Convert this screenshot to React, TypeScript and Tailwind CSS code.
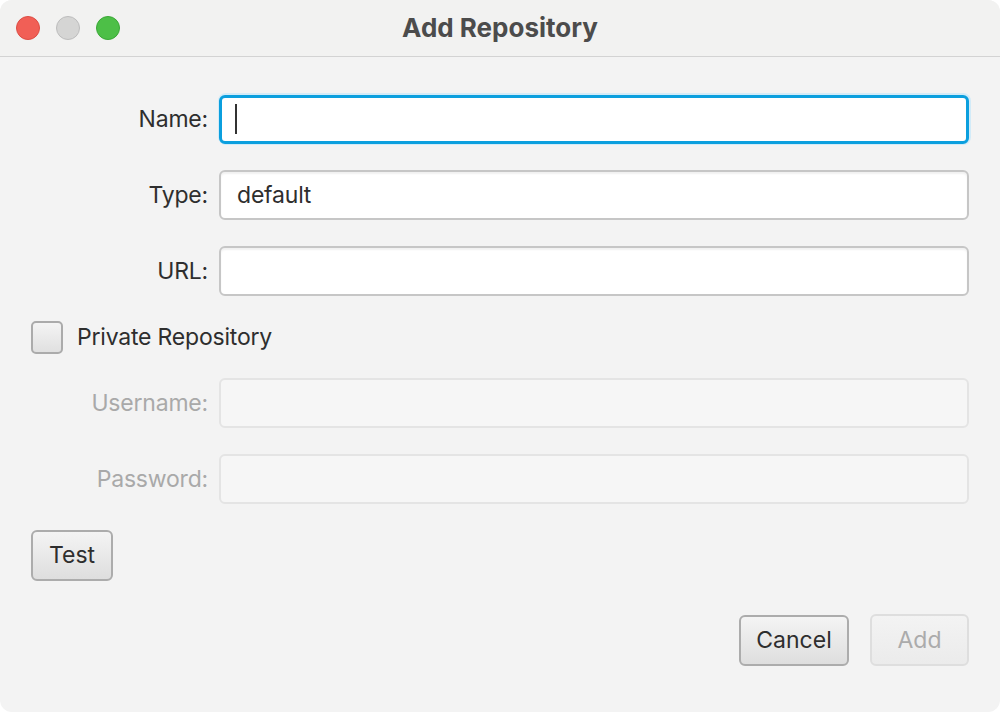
import React from "react";

const font = { fontFamily: "Inter, 'Noto Sans', sans-serif" };

function Field({ children, disabled, focused }: { children?: React.ReactNode; disabled?: boolean; focused?: boolean }) {
  if (focused) {
    return (
      <div className="flex-1 h-[52px] -my-[1px] -mx-[1.5px] rounded-[8px] bg-[#d2ebf8] p-[1.5px]">
        <div className="h-full rounded-[6px] border-[3px] border-[#0b9fde] bg-white flex items-center pl-[13px]">
          {children}
        </div>
      </div>
    );
  }
  return (
    <div
      className={
        "flex-1 h-[50px] rounded-[6px] flex items-center pl-[16px] " +
        (disabled
          ? "border-[2px] border-[#e4e4e4] bg-[#f6f6f6]"
          : "border-[2px] border-[#c6c6c6] bg-white shadow-[inset_0_2px_2px_rgba(0,0,0,0.06)]")
      }
    >
      {children}
    </div>
  );
}

function Row({ label, disabled, focused, children }: { label: string; disabled?: boolean; focused?: boolean; children?: React.ReactNode }) {
  return (
    <div className="flex items-center">
      <div className={"w-[177px] text-right text-[23px] tracking-[-0.2px] " + (disabled ? "text-[#a9a9a9]" : "text-[#2e2e2e]")}>{label}</div>
      <div className="w-[11px]" />
      <Field disabled={disabled} focused={focused}>{children}</Field>
    </div>
  );
}

export default function App() {
  return (
    <div className="w-[1000px] h-[712px] bg-white" style={font}>
      <div className="w-[1000px] h-[712px] rounded-[12px] overflow-hidden bg-[#f3f3f3] flex flex-col">
        <div className="h-[57px] bg-[#f2f2f1] border-b-[1.5px] border-[#d3d3d3] flex items-center relative">
          <div className="flex items-center gap-[16px] pl-[16px]">
            <div className="w-[24px] h-[24px] rounded-full bg-[#f15f56] border border-[#dd4d44]" />
            <div className="w-[24px] h-[24px] rounded-full bg-[#d5d5d4] border border-[#bdbdbd]" />
            <div className="w-[24px] h-[24px] rounded-full bg-[#4dbf47] border border-[#3aa836]" />
          </div>
          <div className="absolute inset-0 pb-[2px] flex items-center justify-center text-[26px] font-bold text-[#4c4c4c] pointer-events-none">
            Add Repository
          </div>
        </div>
        <div className="flex flex-col px-[31px] pt-[37px]">
          <Row label="Name:" focused>
            <div className="w-[2px] h-[30px] bg-[#333]" />
          </Row>
          <div className="h-[26px]" />
          <Row label="Type:">
            <span className="text-[23px] tracking-[-0.2px] text-[#2e2e2e]">default</span>
          </Row>
          <div className="h-[26px]" />
          <Row label="URL:" />
          <div className="h-[25px]" />
          <div className="flex items-center h-[33px]">
            <div className="w-[32px] h-[33px] rounded-[5px] border-[2px] border-[#ababab] bg-gradient-to-b from-[#f4f4f4] to-[#e0e0e0]" />
            <span className="ml-[14px] text-[23px] tracking-[-0.2px] text-[#2e2e2e]">Private Repository</span>
          </div>
          <div className="h-[24px]" />
          <Row label="Username:" disabled />
          <div className="h-[26px]" />
          <Row label="Password:" disabled />
          <div className="h-[26px]" />
          <div className="flex">
            <div className="w-[82px] h-[51px] rounded-[6px] border-[2px] border-[#acacac] bg-gradient-to-b from-[#f4f4f4] to-[#dedede] flex items-center justify-center text-[23px] text-[#2e2e2e]">
              Test
            </div>
          </div>
          <div className="h-[34px]" />
          <div className="flex justify-end gap-[21px]">
            <div className="w-[110px] h-[51px] rounded-[6px] border-[2px] border-[#acacac] bg-gradient-to-b from-[#f4f4f4] to-[#dedede] flex items-center justify-center text-[23px] text-[#2e2e2e]">
              Cancel
            </div>
            <div className="w-[99px] h-[52px] -mt-[1px] rounded-[6px] border-[2px] border-[#dedede] bg-gradient-to-b from-[#f3f3f3] to-[#ebebeb] flex items-center justify-center text-[23px] text-[#ababab]">
              Add
            </div>
          </div>
        </div>
      </div>
    </div>
  );
}
